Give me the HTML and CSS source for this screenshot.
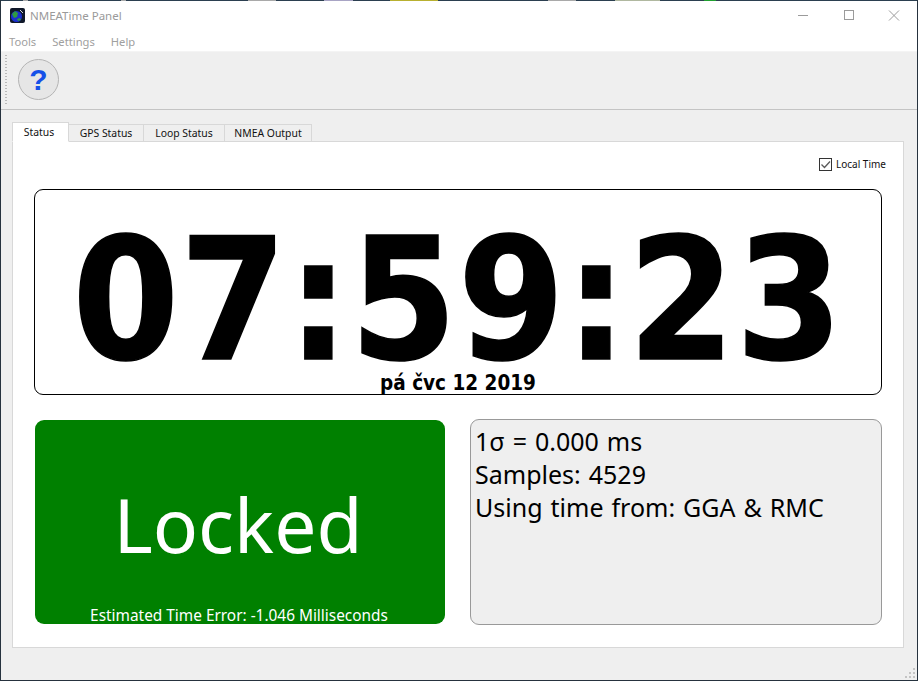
FILE: index.html
```html
<!DOCTYPE html>
<html lang="cs">
<head>
<meta charset="utf-8">
<title>NMEATime Panel</title>
<link rel="stylesheet" href="styles.css">
</head>
<body>
<div class="window">
  <div class="desktop-strip"></div>
  <header class="titlebar">
    <svg class="appicon" width="15" height="15" viewBox="0 0 15 15">
      <rect width="15" height="15" rx="2" fill="#10182a"/>
      <circle cx="6.500" cy="8.500" r="5.500" fill="#1c2fd0"/>
      <path d="M2 6l3-3 3 2-1 4-3 1zM7 11l3-1 1 2-3 1z" fill="#2f9a40"/>
      <path d="M10 2l3 3" stroke="#d0d8e0" stroke-width="1"/>
    </svg>
    <span class="apptitle">NMEATime Panel</span>
    <div class="winbtns">
      <svg class="winbtn" width="12" height="12" viewBox="0 0 12 12"><path d="M1 5.500h10" stroke="#9b9b9b"/></svg>
      <svg class="winbtn" width="12" height="12" viewBox="0 0 12 12"><rect x="1.500" y="0.500" width="9" height="9" fill="none" stroke="#9b9b9b"/></svg>
      <svg class="winbtn" width="12" height="12" viewBox="0 0 12 12"><path d="M1 0.500l10 10M11 0.500l-10 10" stroke="#9b9b9b"/></svg>
    </div>
  </header>
  <nav class="menubar">
    <span>Tools</span><span>Settings</span><span>Help</span>
  </nav>
  <div class="toolbar">
    <div class="grip"></div>
    <button class="helpbtn">?</button>
  </div>
  <main class="content">
    <div class="tabs">
      <div class="tab active">Status</div>
      <div class="tab">GPS Status</div>
      <div class="tab">Loop Status</div>
      <div class="tab">NMEA Output</div>
    </div>
    <section class="pane">
      <label class="localtime">
        <span class="check"><svg width="13" height="13" viewBox="0 0 13 13"><path d="M2.500 6.500l3 3 5.500-6" fill="none" stroke="#5a5a5a" stroke-width="1.300"/></svg></span>
        <span>Local Time</span>
      </label>
      <div class="clock">
        <div class="time">07:59:23</div>
        <div class="date">pá čvc 12 2019</div>
      </div>
      <div class="lower">
        <div class="lock">
          <div class="locked">Locked</div>
          <div class="err">Estimated Time Error: -1.046 Milliseconds</div>
        </div>
        <div class="stats">
          <div>1σ = 0.000 ms</div>
          <div>Samples: 4529</div>
          <div>Using time from: GGA &amp; RMC</div>
        </div>
      </div>
    </section>
  </main>
  <svg class="sizegrip" width="12" height="12" viewBox="0 0 12 12" fill="#c4c4c4">
    <rect x="8" y="0" width="2" height="2"/><rect x="4" y="4" width="2" height="2"/><rect x="8" y="4" width="2" height="2"/><rect x="0" y="8" width="2" height="2"/><rect x="4" y="8" width="2" height="2"/><rect x="8" y="8" width="2" height="2"/>
  </svg>
</div>
</body>
</html>
```

FILE: styles.css
```css
* { box-sizing: border-box; }
html, body { margin: 0; height: 100%; }
body { font-family: "Noto Sans", sans-serif; background: #26323e; overflow: hidden; }
.window {
  position: relative; width: 918px; height: 681px;
  border: 1px solid #26323e; border-top: 0;
  background: #efefef; display: flex; flex-direction: column;
}
.desktop-strip {
  height: 1px; flex: none;
  background: linear-gradient(90deg, #2b3f50 0 22px, #a9a9a9 22px 27px, #2b3f50 27px 120px, #a9a9a9 120px 125px, #2b3f50 125px 247px, #a9a9a9 247px 275px, #2b3f50 275px 323px, #a8a4c4 323px 352px, #2b3f50 352px 389px, #b8b030 389px 437px, #2b3f50 437px 547px, #a9a9a9 547px 575px, #2b3f50 575px 614px, #b0b8a0 614px 659px, #2b3f50 659px 703px, #20a030 703px 715px, #2b3f50 715px);
}
.titlebar { height: 29px; background: #fff; display: flex; align-items: center; padding: 0 0 0 9px; }
.appicon { display: block; }
.apptitle { margin-left: 5px; font-size: 11.500px; color: #9a9a9a; }
.winbtns { margin-left: auto; display: flex; gap: 33.500px; padding-right: 17px; margin-top: 1px; }
.winbtn { display: block; }
.menubar { height: 22px; background: #fff; display: flex; gap: 16px; padding: 4px 0 0 8px; font-size: 11.200px; color: #a0a0a0; border-bottom: 1px solid #f4f4f4; }
.toolbar { height: 58px; display: flex; align-items: center; padding: 0 0 2px 4px; border-bottom: 1px solid #c4c4c4; }
.grip { width: 2px; height: 50px; margin-right: 11px; background-image: repeating-linear-gradient(#b9b9b9 0 1px, transparent 1px 3px); }
.helpbtn {
  width: 41px; height: 41px; border-radius: 50%; padding: 1px 0 0;
  border: 1px solid #b4b4b4; background: #e6e6e6; color: #1550e8;
  font: 700 30px/38px "Liberation Sans", sans-serif;
}
.content { flex: 1; padding: 12px 13px 32px 11px; display: flex; flex-direction: column; }
.tabs { display: grid; grid-template-columns: 57px 75px 81px 87px; justify-content: start; height: 20px; font-size: 10.400px; color: #111; margin-bottom: -1px; position: relative; z-index: 1; align-items: end; text-align: center; }
.tab { height: 18px; line-height: 17px; background: #efefef; border: 1px solid #d8d8d8; border-left: 0; }
.tab.active { height: 20px; line-height: 18px; background: #fff; border-left: 1px solid #d8d8d8; border-bottom-color: #fff; padding-right: 3px; }
.pane { flex: 1; background: #fff; border: 1px solid #d8d8d8; padding: 13px 21px 0 21px; display: flex; flex-direction: column; }
.localtime { align-self: flex-end; display: flex; align-items: center; gap: 4px; font-size: 10px; color: #111; height: 18px; margin-right: -4px; }
.check { width: 13px; height: 13px; border: 1px solid #333; display: block; }
.check svg { display: block; margin: -1px; }
.clock {
  position: relative; margin-top: 16px; height: 206px; border: 1px solid #000; border-radius: 9px; background: #fff;
  text-align: center; color: #000; font-family: "DejaVu Sans", sans-serif; font-weight: 700; font-stretch: condensed;
}
.time { font-size: 170px; letter-spacing: 1.300px; line-height: 140px; margin-top: 40px; white-space: nowrap; -webkit-text-stroke: 1.500px #000; }
.date { position: absolute; left: 0; right: 0; bottom: 0; font-size: 20.500px; line-height: 22px; }
.lower { display: flex; gap: 25px; margin-top: 24px; }
.lock {
  width: 410px; height: 204px; margin: 1px 0 0 1px; background: #008000; color: #fff; border-radius: 9px;
  display: flex; flex-direction: column; align-items: center; position: relative;
}
.locked { font-size: 75px; line-height: 100px; margin: 54px 4px 0 0; }
.err { position: absolute; left: 0; right: 2px; bottom: -2px; text-align: center; font-size: 15.400px; line-height: 20px; }
.stats {
  width: 412px; height: 206px; background: #efefef; border: 1px solid #999; border-radius: 9px;
  padding: 5px 4px; font-size: 25px; word-spacing: 1.500px; line-height: 33px; color: #000;
}
.sizegrip { position: absolute; right: 0; bottom: 0; }
```
